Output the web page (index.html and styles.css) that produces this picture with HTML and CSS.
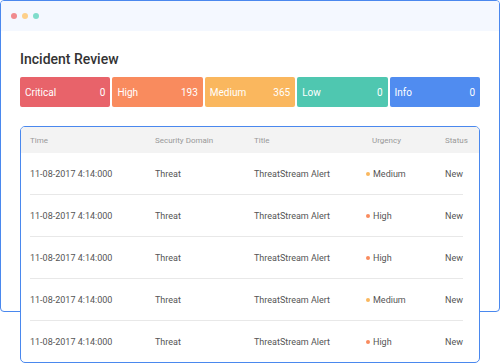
FILE: index.html
```html
<!DOCTYPE html>
<html lang="en">

<head>
    <meta charset="UTF-8">
    <meta name="viewport" content="width=device-width, initial-scale=1.0">
    <title>Incident Review</title>
    <link rel="stylesheet" href="styles.css">
</head>

<body>
    <div class="window">
        <div class="window-bar">
            <span class="dot dot-red"></span>
            <span class="dot dot-yellow"></span>
            <span class="dot dot-green"></span>
        </div>
        <div class="window-body">
            <h2 class="page-title">Incident Review</h2>
            <div class="counts">
                <div class="count critical"><span>Critical</span><span>0</span></div>
                <div class="count high"><span>High</span><span>193</span></div>
                <div class="count medium"><span>Medium</span><span>365</span></div>
                <div class="count low"><span>Low</span><span>0</span></div>
                <div class="count info"><span>Info</span><span>0</span></div>
            </div>

            <div class="table-card">
                <div class="table-head">
                    <span>Time</span>
                    <span>Security Domain</span>
                    <span>Title</span>
                    <span class="head-urgency">Urgency</span>
                    <span>Status</span>
                </div>
                <div class="table-row">
                    <span>11-08-2017 4:14:000</span>
                    <span>Threat</span>
                    <span>ThreatStream Alert</span>
                    <span class="urgency"><i class="bullet bullet-medium"></i>Medium</span>
                    <span>New</span>
                </div>
                <div class="table-row">
                    <span>11-08-2017 4:14:000</span>
                    <span>Threat</span>
                    <span>ThreatStream Alert</span>
                    <span class="urgency"><i class="bullet bullet-high"></i>High</span>
                    <span>New</span>
                </div>
                <div class="table-row">
                    <span>11-08-2017 4:14:000</span>
                    <span>Threat</span>
                    <span>ThreatStream Alert</span>
                    <span class="urgency"><i class="bullet bullet-high"></i>High</span>
                    <span>New</span>
                </div>
                <div class="table-row">
                    <span>11-08-2017 4:14:000</span>
                    <span>Threat</span>
                    <span>ThreatStream Alert</span>
                    <span class="urgency"><i class="bullet bullet-medium"></i>Medium</span>
                    <span>New</span>
                </div>
                <div class="table-row">
                    <span>11-08-2017 4:14:000</span>
                    <span>Threat</span>
                    <span>ThreatStream Alert</span>
                    <span class="urgency"><i class="bullet bullet-high"></i>High</span>
                    <span>New</span>
                </div>
            </div>
        </div>
    </div>
</body>

</html>
```

FILE: styles.css
```css
* {
    margin: 0;
    padding: 0;
    box-sizing: border-box;
}

body {
    font-family: Roboto, "Liberation Sans", sans-serif;
    background-color: #fff;
    width: 500px;
    height: 363px;
    overflow: hidden;
}

.window {
    width: 500px;
    height: 312px;
    border: 1px solid #4a88ee;
    border-radius: 4px;
}

.window-bar {
    height: 30px;
    background-color: #f4f8ff;
    display: flex;
    align-items: center;
    gap: 5px;
    padding-left: 10px;
    border-radius: 3px 3px 0 0;
}

.dot {
    width: 6px;
    height: 6px;
    border-radius: 50%;
}

.dot-red {
    background-color: #f08a8e;
}

.dot-yellow {
    background-color: #fdd08a;
}

.dot-green {
    background-color: #7edccb;
}

.window-body {
    padding: 18px 19px 0 19px;
}

.page-title {
    font-size: 14px;
    line-height: 20px;
    font-weight: 500;
    color: #333;
    margin-bottom: 8px;
}

.counts {
    display: grid;
    grid-template-columns: repeat(5, 1fr);
    gap: 2px;
}

.count {
    height: 30px;
    border-radius: 2px;
    display: flex;
    justify-content: space-between;
    align-items: center;
    padding: 0 5px;
    color: #fff;
    font-size: 10px;
}

.critical {
    background-color: #e8636a;
}

.high {
    background-color: #f98b5e;
}

.medium {
    background-color: #fab75e;
}

.low {
    background-color: #4fc7b0;
}

.info {
    background-color: #508cf0;
}

.table-card {
    position: relative;
    margin-top: 19px;
    background-color: #fff;
    border: 1px solid #4a88ee;
    border-radius: 5px;
    overflow: hidden;
    height: 237px;
}

.table-head,
.table-row {
    display: grid;
    grid-template-columns: 125px 99px 112px 79px auto;
    align-items: center;
}

.table-head {
    height: 26px;
    background-color: #f3f3f3;
    padding-left: 9px;
    font-size: 8px;
    color: #999;
}

.head-urgency {
    padding-left: 6px;
}

.table-row {
    height: 42px;
    margin: 0 16px 0 9px;
    border-bottom: 1px solid #e8e8e8;
    font-size: 9px;
    color: #555;
}

.table-row:last-child {
    border-bottom: none;
}

.urgency {
    display: flex;
    align-items: center;
}

.bullet {
    width: 4px;
    height: 4px;
    border-radius: 50%;
    margin-right: 3px;
}

.bullet-medium {
    background-color: #fab75e;
}

.bullet-high {
    background-color: #f98b5e;
}
```
